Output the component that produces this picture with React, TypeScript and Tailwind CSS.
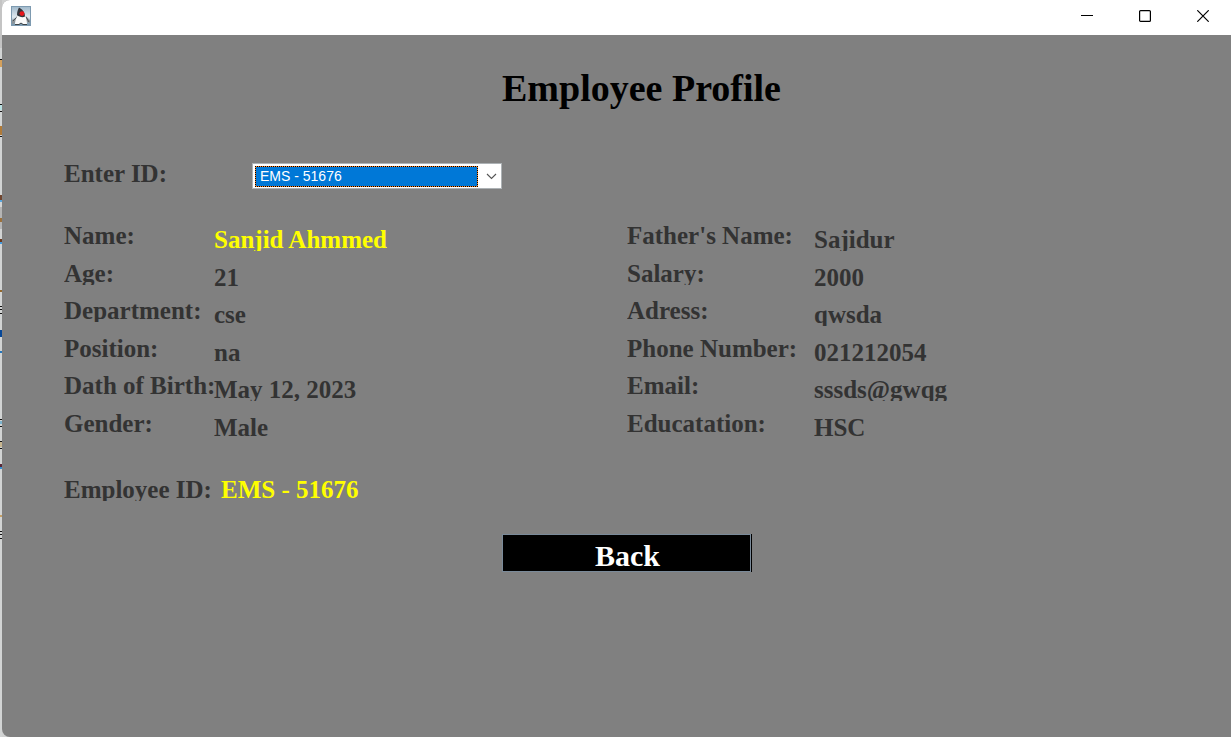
import { useState } from "react";

type Field = { label: string; value: string; highlight?: boolean };

const rows: [Field, Field][] = [
  [
    { label: "Name:", value: "Sanjid Ahmmed", highlight: true },
    { label: "Father's Name:", value: "Sajidur" },
  ],
  [
    { label: "Age:", value: "21" },
    { label: "Salary:", value: "2000" },
  ],
  [
    { label: "Department:", value: "cse" },
    { label: "Adress:", value: "qwsda" },
  ],
  [
    { label: "Position:", value: "na" },
    { label: "Phone Number:", value: "021212054" },
  ],
  [
    { label: "Dath of Birth:", value: "May 12, 2023" },
    { label: "Email:", value: "sssds@gwqg" },
  ],
  [
    { label: "Gender:", value: "Male" },
    { label: "Educatation:", value: "HSC" },
  ],
];

const labelClass = "h-[25px] overflow-hidden whitespace-nowrap leading-7";

function JavaIcon() {
  return (
    <svg width="20" height="20" viewBox="0 0 20 20" aria-hidden="true">
      <defs>
        <linearGradient id="sky" x1="0" y1="0" x2="0" y2="1">
          <stop offset="0" stopColor="#9fb8cb" />
          <stop offset="0.55" stopColor="#dfe8ee" />
          <stop offset="1" stopColor="#6d8fa8" />
        </linearGradient>
      </defs>
      <rect x="0.5" y="0.5" width="19" height="19" fill="url(#sky)" stroke="#7d9ab0" />
      <path d="M1 14c3-1 4-3 6-5l1 4-3 4-4 1zM14 10c2 0 3 3 5 4v3l-4-1z" fill="#8d9499" />
      <path d="M2 15l4-4M15 11l3 5" stroke="#4b5156" strokeWidth="1" />
      <path d="M7 9c-2 3-3 6-3 9l3 .5 3-1.5 3 1.5 3-.5c0-3-1-6-2-9z" fill="#fafafa" />
      <path d="M8 1.5C7 3 6 6 6 9c2 2 6 3 8 1.5C14 6 11 3 8 1.5z" fill="#34363b" />
      <circle cx="11" cy="7.6" r="2.4" fill="#e8161c" />
      <path d="M4 18.5h4l2-1.5 2 1.5h4" fill="none" stroke="#3e4347" />
    </svg>
  );
}

const marks: [number, number, string][] = [
  [59, 1, "#111111"], [60, 7, "#d5a15c"], [104, 1, "#111111"], [105, 5, "#b8e0e2"],
  [111, 1, "#111111"], [126, 9, "#b07a38"], [136, 1, "#111111"], [195, 5, "#70452f"],
  [200, 2, "#56a5df"], [207, 22, "#b5b5b5"], [218, 4, "#9c713c"], [239, 3, "#6b3a20"],
  [242, 2, "#429be0"], [290, 2, "#94682c"], [306, 1, "#111111"], [309, 1, "#111111"],
  [313, 1, "#111111"], [330, 7, "#064798"], [351, 2, "#2476bc"], [419, 1, "#111111"],
  [421, 3, "#7ab3ce"], [426, 1, "#111111"], [441, 1, "#111111"], [442, 5, "#c8b690"],
  [448, 1, "#111111"], [464, 3, "#592636"], [467, 2, "#338fd3"], [515, 2, "#c6a066"],
  [531, 1, "#111111"], [534, 1, "#111111"], [538, 1, "#111111"],
];

function DesktopEdge() {
  return (
    <svg className="w-[2px] shrink-0 self-start" width="2" height="737" viewBox="0 0 2 737" aria-hidden="true">
      <rect width="2" height="48" fill="#c4c4c4" />
      <rect y="48" width="2" height="689" fill="#d2d4d4" />
      {marks.map(([y, h, fill]) => (
        <rect key={y} y={y} width="2" height={h} fill={fill} />
      ))}
    </svg>
  );
}

export default function App() {
  const [id, setId] = useState("EMS - 51676");

  return (
    <div className="flex min-h-screen bg-[#cfd0d0] font-['Liberation_Serif',serif]">
      <DesktopEdge />
      <div className="flex grow flex-col overflow-hidden rounded-l-lg bg-[#808080]">
        <header className="flex h-[35px] items-center justify-between bg-white pl-[9px]">
          <div className="-mt-1">
            <JavaIcon />
          </div>
          <div className="-mt-1 -mr-px flex">
            <button type="button" aria-label="Minimize" className="flex h-8 w-[58px] items-center justify-center">
              <svg width="12" height="12" viewBox="0 0 12 12" aria-hidden="true">
                <path d="M0 5.5h12" stroke="#000" />
              </svg>
            </button>
            <button type="button" aria-label="Maximize" className="flex h-8 w-[58px] items-center justify-center">
              <svg width="12" height="12" viewBox="0 0 12 12" aria-hidden="true">
                <rect x="0.6" y="0.6" width="10.8" height="10.8" rx="1" fill="none" stroke="#000" strokeWidth="1.2" />
              </svg>
            </button>
            <button type="button" aria-label="Close" className="flex h-8 w-[58px] items-center justify-center">
              <svg width="12" height="12" viewBox="0 0 12 12" aria-hidden="true">
                <path d="m0.3 0.3 11.4 11.4M11.7 0.3 0.3 11.7" stroke="#000" strokeWidth="1.2" />
              </svg>
            </button>
          </div>
        </header>

        <main className="px-[62px] pt-8 text-[25px] font-bold text-[#333333]">
          <h1 className="pl-[438px] text-[38px] leading-[42px] text-black">Employee Profile</h1>

          <div className="mt-[51px] flex items-start">
            <label htmlFor="employee-id" className={`${labelClass} w-[188px]`}>
              Enter ID:
            </label>
            <div className="mt-[3px] flex h-[26px] w-[250px] items-center border border-[#adb2b5] bg-white pl-[2px]">
              <div className="flex bg-[#ff8728]">
                <select
                  id="employee-id"
                  value={id}
                  onChange={(e) => setId(e.target.value)}
                  className="h-[21px] w-[223px] appearance-none border border-dotted border-black bg-[#0078d7] bg-clip-padding pl-1 font-['Liberation_Sans',sans-serif] text-[14px] leading-[18px] font-normal text-white outline-none"
                >
                  <option>EMS - 51676</option>
                </select>
              </div>
              <svg className="ml-2" width="11" height="7" viewBox="0 0 11 7" aria-hidden="true">
                <path d="m1 1 4.5 4.5L10 1" fill="none" stroke="#555" strokeWidth="1.1" />
              </svg>
            </div>
          </div>

          <dl className="mt-[33px] grid h-[225px] grid-rows-6">
            {rows.map((pair) => (
              <div key={pair[0].label} className="grid grid-cols-[150px_413px_187px_1fr] items-start">
                {pair.map((f) => (
                  <div key={f.label} className="contents">
                    <dt className={labelClass}>{f.label}</dt>
                    <dd className={`${labelClass} mt-1 ${f.highlight ? "text-[#ffff00]" : ""}`}>{f.value}</dd>
                  </div>
                ))}
              </div>
            ))}
          </dl>

          <dl className="mt-[29px] flex">
            <dt className={`${labelClass} w-[157px]`}>Employee ID:</dt>
            <dd className={`${labelClass} text-[#ffff00]`}>{id}</dd>
          </dl>

          <div className="mt-[33px] pl-[438px]">
            <button
              type="button"
              className="flex h-[38px] w-[250px] items-center justify-center border-r border-black bg-black text-[30px] leading-9 text-white"
            >
              <span className="flex h-full w-full items-center justify-center border border-[#7a8a99] pt-[5px] pl-[2px]">
                Back
              </span>
            </button>
          </div>
        </main>
      </div>
    </div>
  );
}
